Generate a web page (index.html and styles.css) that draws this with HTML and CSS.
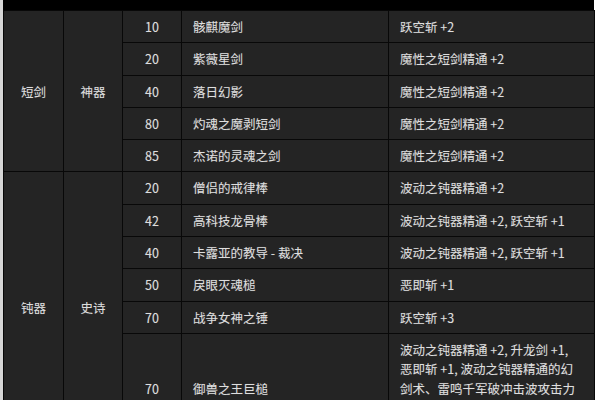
FILE: index.html
```html
<!DOCTYPE html>
<html lang="zh">
<head>
<meta charset="utf-8">
<title>武器列表</title>
<link rel="stylesheet" href="styles.css">
</head>
<body>
<div class="frame">
  <div class="topbar"></div>
  <table class="weapons">
    <colgroup>
      <col class="c-type">
      <col class="c-grade">
      <col class="c-level">
      <col class="c-name">
      <col class="c-effect">
    </colgroup>
    <tbody>
      <tr>
        <td class="center" rowspan="5">短剑</td>
        <td class="center" rowspan="5">神器</td>
        <td class="center">10</td>
        <td>骸麒魔剑</td>
        <td>跃空斩 +2</td>
      </tr>
      <tr>
        <td class="center">20</td>
        <td>紫薇星剑</td>
        <td>魔性之短剑精通 +2</td>
      </tr>
      <tr>
        <td class="center">40</td>
        <td>落日幻影</td>
        <td>魔性之短剑精通 +2</td>
      </tr>
      <tr>
        <td class="center">80</td>
        <td>灼魂之魔剥短剑</td>
        <td>魔性之短剑精通 +2</td>
      </tr>
      <tr>
        <td class="center">85</td>
        <td>杰诺的灵魂之剑</td>
        <td>魔性之短剑精通 +2</td>
      </tr>
      <tr>
        <td class="center" rowspan="6">钝器</td>
        <td class="center" rowspan="6">史诗</td>
        <td class="center">20</td>
        <td>僧侣的戒律棒</td>
        <td>波动之钝器精通 +2</td>
      </tr>
      <tr>
        <td class="center">42</td>
        <td>高科技龙骨棒</td>
        <td>波动之钝器精通 +2, 跃空斩 +1</td>
      </tr>
      <tr>
        <td class="center">40</td>
        <td>卡露亚的教导 - 裁决</td>
        <td>波动之钝器精通 +2, 跃空斩 +1</td>
      </tr>
      <tr>
        <td class="center">50</td>
        <td>戾眼灭魂槌</td>
        <td>恶即斩 +1</td>
      </tr>
      <tr>
        <td class="center">70</td>
        <td>战争女神之锤</td>
        <td>跃空斩 +3</td>
      </tr>
      <tr>
        <td class="center">70</td>
        <td>御兽之王巨槌</td>
        <td class="long">波动之钝器精通 +2, 升龙剑 +1, 恶即斩 +1, 波动之钝器精通的幻剑术、雷鸣千军破冲击波攻击力 +10%, 地裂·波动剑攻击力 +10%</td>
      </tr>
    </tbody>
  </table>
</div>
</body>
</html>
```

FILE: styles.css
```css
html, body {
  margin: 0;
  padding: 0;
  background: #ffffff;
}

body {
  font-family: "Microsoft YaHei", "Noto Sans CJK SC", "Noto Sans", sans-serif;
  font-size: 12.5px;
  color: #dedede;
}

.frame {
  width: 591px;
  margin-left: 3px;
  box-shadow: -3px 0 0 #d6d6d6;
}

.topbar {
  height: 10px;
  background: #000000;
}

.weapons {
  width: 591px;
  border-collapse: collapse;
  table-layout: fixed;
  background: #242424;
}

.c-type { width: 60px; }
.c-grade { width: 59px; }
.c-level { width: 59px; }
.c-name { width: 207px; }
.c-effect { width: 206px; }

.weapons td {
  border: 1px solid #080808;
  padding: 6px 10px 6px 11px;
  line-height: 19.3px;
  vertical-align: middle;
  text-align: left;
  text-shadow: 0 0 1px rgba(255, 255, 255, 0.25);
}

.weapons td.center {
  text-align: center;
  padding-left: 4px;
  padding-right: 4px;
}

.weapons td.long {
  padding-right: 16px;
}
```
